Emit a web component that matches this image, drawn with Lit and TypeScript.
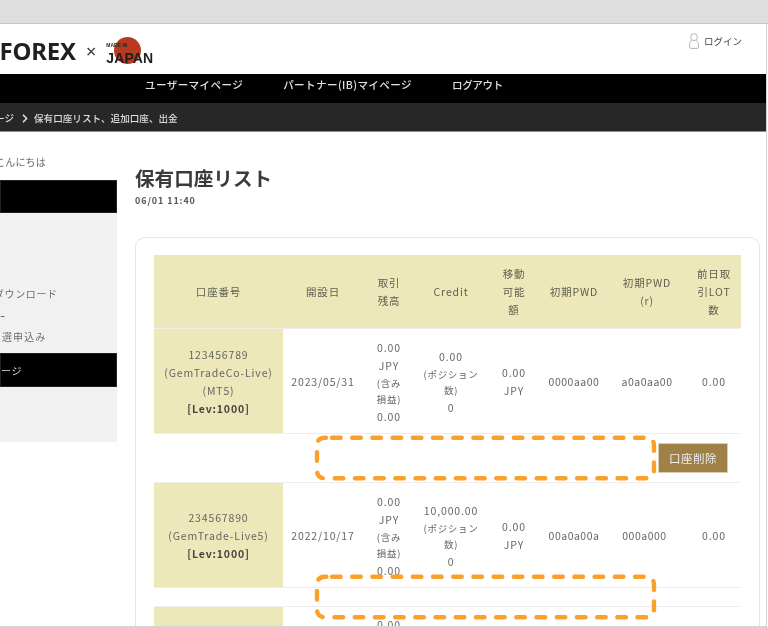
import { LitElement, html, css, svg } from "lit";
import { customElement } from "lit/decorators.js";

const boxPath = (t: number, b: number) =>
  `M332 ${t}H646Q654 ${t} 654 ${t + 8}V${b - 8}Q654 ${b} 646 ${b}H325Q317 ${b} 317 ${b - 8}V${t + 8}Q317 ${t} 325 ${t}H332`;

@customElement("app-root")
export class AppRoot extends LitElement {
  static styles = css`
    :host {
      display: block;
      width: 768px;
      height: 627px;
      overflow: hidden;
      position: relative;
      background: #fff;
      font-family: "Noto Sans CJK JP", "Noto Sans", sans-serif;
      color: #555;
      filter: blur(0.3px);
    }
    .chrome { height: 23px; background: #dedede; border-bottom: 1px solid #c6c6c6; }
    .frame {
      height: 602px;
      overflow: hidden;
      border-right: 1px solid #d4d4d4;
      border-bottom: 1px solid #d4d4d4;
      margin-right: 1px;
    }
    .head { height: 50px; display: flex; align-items: flex-start; }
    .logo { display: flex; align-items: center; height: 50px; width: 160px; }
    .forex {
      width: 76px;
      flex: none;
      display: flex;
      justify-content: flex-end;
      font: 700 24px/1 "Noto Sans", sans-serif;
      color: #231f20;
      letter-spacing: -0.2px;
      margin-top: 4px;
    }
    .times { margin: 4px 0 0 10px; font: 400 18px/1 "Noto Sans", sans-serif; color: #333; }
    .mij { position: relative; width: 50px; height: 30px; margin: 5px 0 0 9px; }
    .sun { position: absolute; left: 9px; top: 0; width: 27px; height: 27px; border-radius: 50%; background: #b83a20; }
    .made { position: absolute; left: 1px; top: 5px; font: 700 5px/6px "Liberation Sans", sans-serif; color: #33261f; }
    .japan { position: absolute; left: 1px; top: 14px; font: 700 14px/15px "Liberation Sans", sans-serif; color: #1f1f1f; letter-spacing: 0.1px; }
    .login {
      margin-left: auto;
      display: flex;
      align-items: center;
      gap: 5px;
      margin-top: 9px;
      margin-right: 24px;
      font-size: 9.5px;
      line-height: 16px;
      color: #444;
    }
    .nav {
      height: 21px;
      padding-bottom: 8px;
      background: #000;
      color: #e0e0e0;
      display: flex;
      align-items: center;
      gap: 40px;
      padding-left: 145px;
      font-size: 10.5px;
      letter-spacing: 0.45px;
      font-weight: 500;
    }
    .nav .out { letter-spacing: -0.3px; }
    .crumb {
      height: 26px;
      padding-top: 2px;
      background: #272727;
      border-bottom: 1px solid #8a8a8a;
      color: #ddd;
      display: flex;
      align-items: center;
      font-size: 9.6px;
      font-weight: 500;
    }
    .crumb .c1 { width: 14px; text-align: right; white-space: nowrap; direction: rtl; overflow: hidden; }
    .crumb svg { margin: 0 6px 0 8px; }
    .body { display: flex; gap: 18px; }
    .side { width: 117px; flex: none; overflow: hidden; }
    .hello { height: 48px; padding-top: 21px; box-sizing: border-box; font-size: 10px; line-height: 18px; color: #666; letter-spacing: 0.2px; white-space: nowrap; text-indent: -5px; }
    .black { background: #000; border: 1px solid #222; box-sizing: border-box; color: #ddd; font-size: 10px; }
    .b1 { height: 33px; }
    .menu { background: #f1f1f1; height: 229px; display: flex; flex-direction: column; }
    .gap { height: 71px; }
    .mi { height: 21.5px; font-size: 10px; line-height: 20px; color: #6c6c6c; letter-spacing: 0.6px; white-space: nowrap; }
    .mi.cut { text-indent: -6px; }
    .mi.in { padding-left: 2px; letter-spacing: 1.1px; }
    .b2 { height: 34px; margin-top: 4.5px; display: flex; align-items: center; letter-spacing: 0.6px; }
    .main { width: 625px; padding-top: 33px; }
    h1 { margin: 0; font-size: 19.6px; line-height: 26px; font-weight: 700; color: #3a3a3a; }
    .date { font-size: 9px; line-height: 14px; font-weight: 700; color: #555; letter-spacing: 0.9px; margin-top: 3px; }
    .card {
      margin-top: 29px;
      border: 1px solid #e6e6e6;
      border-radius: 10px;
      padding: 17px 18px;
      height: 500px;
      box-sizing: border-box;
    }
    table { border-collapse: collapse; table-layout: fixed; width: 587px; font-size: 10.5px; letter-spacing: 0.85px; line-height: 18px; }
    th, td { padding: 0; text-align: center; vertical-align: middle; font-weight: 400; color: #666; }
    thead th { background: #ede8b9; height: 73px; color: #5f5f50; }
    tbody tr { border-top: 1px solid #eee; }
    td.acct { background: #ede8b9; }
    .lev { font-weight: 700; color: #444; }
    .r1 td, .r2 td { height: 105px; box-sizing: border-box; padding-top: 2px; }
    .a1 td { height: 48px; }
    .a2 td { height: 18px; }
    .small { font-size: 9.5px; line-height: 16.5px; display: block; letter-spacing: 0.7px; }
    td.pw { letter-spacing: 0.5px; }
    td.pw.off { padding-right: 5px; }
    .r3 td { height: 40px; vertical-align: top; padding-top: 9px; }
    .act { text-align: right; padding-right: 13px; }
    .btn {
      display: inline-block;
      width: 70px;
      height: 30px;
      line-height: 28px;
      box-sizing: border-box;
      background: #9f8147;
      border: 1px solid #d8cdb0;
      color: #eee;
      font-size: 11.5px;
      letter-spacing: 0.5px;
      text-align: center;
      vertical-align: middle;
    }
    .over { position: absolute; inset: 0; pointer-events: none; }
  `;

  render() {
    return html`
      <div class="chrome"></div>
      <div class="frame">
        <div class="head">
          <div class="logo">
            <div class="forex">FOREX</div>
            <div class="times">×</div>
            <div class="mij">
              <div class="sun"></div>
              <div class="made">MADE IN</div>
              <div class="japan">JAPAN</div>
            </div>
          </div>
          <div class="login">
            <svg width="10" height="16" viewBox="0 0 10 16" fill="none" stroke="#b5b5b5" stroke-width="1">
              <circle cx="5" cy="4.2" r="3.4" />
              <path d="M2.8 7.4C1.2 8.4.6 10 .6 12v2.2c0 .8.4 1.2 1.2 1.2h6.4c.8 0 1.2-.4 1.2-1.2V12c0-2-.6-3.6-2.2-4.6" />
            </svg>
            <span>ログイン</span>
          </div>
        </div>
        <div class="nav">
          <span>ユーザーマイページ</span>
          <span>パートナー(IB)マイページ</span>
          <span class="out">ログアウト</span>
        </div>
        <div class="crumb">
          <span class="c1">ージ</span>
          <svg width="6" height="9" viewBox="0 0 6 9" fill="none" stroke="#e4e4e4" stroke-width="1.5"><path d="M1 .8 4.6 4.5 1 8.2" /></svg>
          <span>保有口座リスト、追加口座、出金</span>
        </div>
        <div class="body">
          <div class="side">
            <div class="hello">こんにちは</div>
            <div class="black b1"></div>
            <div class="menu">
              <div class="gap"></div>
              <div class="mi cut">ダウンロード</div>
              <div class="mi">ｰ</div>
              <div class="mi in">選申込み</div>
              <div class="black b2">ージ</div>
            </div>
          </div>
          <div class="main">
            <h1>保有口座リスト</h1>
            <div class="date">06/01 11:40</div>
            <div class="card">
              <table>
                <colgroup>
                  <col style="width:129px" /><col style="width:80px" /><col style="width:52px" /><col style="width:72px" />
                  <col style="width:54px" /><col style="width:66px" /><col style="width:80px" /><col style="width:54px" />
                </colgroup>
                <thead>
                  <tr>
                    <th>口座番号</th><th>開設日</th><th>取引<br />残高</th><th>Credit</th>
                    <th>移動<br />可能<br />額</th><th>初期PWD</th><th>初期PWD<br />(r)</th><th>前日取<br />引LOT<br />数</th>
                  </tr>
                </thead>
                <tbody>
                  <tr class="r1">
                    <td class="acct">123456789<br />(GemTradeCo-Live)<br />(MT5)<br /><span class="lev">[Lev:1000]</span></td>
                    <td>2023/05/31</td>
                    <td>0.00<br />JPY<span class="small">(含み<br />損益)</span>0.00</td>
                    <td>0.00<span class="small">(ポジション<br />数)</span>0</td>
                    <td>0.00<br />JPY</td>
                    <td class="pw">0000aa00</td><td class="pw">a0a0aa00</td><td>0.00</td>
                  </tr>
                  <tr class="a1">
                    <td colspan="8" class="act"><span class="btn">口座削除</span></td>
                  </tr>
                  <tr class="r2">
                    <td class="acct">234567890<br />(GemTrade-Live5)<br /><span class="lev">[Lev:1000]</span></td>
                    <td>2022/10/17</td>
                    <td>0.00<br />JPY<span class="small">(含み<br />損益)</span>0.00</td>
                    <td>10,000.00<span class="small">(ポジション<br />数)</span>0</td>
                    <td>0.00<br />JPY</td>
                    <td class="pw">00a0a00a</td><td class="pw off">000a000</td><td>0.00</td>
                  </tr>
                  <tr class="a2"><td colspan="8"></td></tr>
                  <tr class="r3">
                    <td class="acct"></td><td></td><td>0.00</td><td></td><td></td><td></td><td></td><td></td>
                  </tr>
                </tbody>
              </table>
            </div>
          </div>
        </div>
      </div>
      <svg class="over" width="768" height="627" viewBox="0 0 768 627" fill="none"
        stroke="#f9a12a" stroke-width="4.4" stroke-linecap="round" stroke-dasharray="8.6 11.6">
        ${svg`<path d=${boxPath(437.7, 478.3)} />`}
        ${svg`<path d=${boxPath(576.8, 617.2)} />`}
      </svg>
    `;
  }
}
